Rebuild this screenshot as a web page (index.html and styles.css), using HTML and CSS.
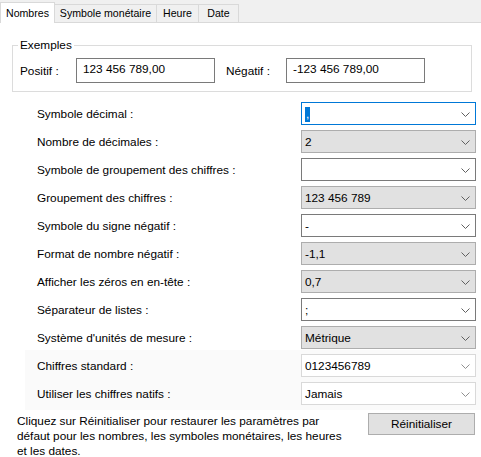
FILE: index.html
```html
<!DOCTYPE html>
<html lang="fr">
<head>
<meta charset="utf-8">
<title>Nombres</title>
<link rel="stylesheet" href="styles.css">
</head>
<body>
<div class="tabbar">
  <div class="tab tab-active tab-nombres">Nombres</div>
  <div class="tab tab-monnaie">Symbole monétaire</div>
  <div class="tab tab-heure">Heure</div>
  <div class="tab tab-date">Date</div>
</div>
<div class="panel">
  <fieldset class="group">
    <legend class="group-title">Exemples</legend>
    <div class="examples">
      <span class="ex-label">Positif :</span>
      <div class="textbox">123 456 789,00</div>
      <span class="ex-label ex-neg">Négatif :</span>
      <div class="textbox">-123 456 789,00</div>
    </div>
  </fieldset>

  <div class="settings">
    <div class="row"><span class="label">Symbole décimal :</span><div class="combo combo-focus"><span class="value"><span class="sel">,</span></span><svg class="chev" width="9" height="5" viewBox="0 0 9 5"><polyline points="0.5,0.5 4.5,4.5 8.5,0.5" fill="none" stroke="#606060" stroke-width="1"/></svg></div></div>
    <div class="row"><span class="label">Nombre de décimales :</span><div class="combo combo-list"><span class="value">2</span><svg class="chev" width="9" height="5" viewBox="0 0 9 5"><polyline points="0.5,0.5 4.5,4.5 8.5,0.5" fill="none" stroke="#606060" stroke-width="1"/></svg></div></div>
    <div class="row"><span class="label">Symbole de groupement des chiffres :</span><div class="combo combo-edit"><span class="value"></span><svg class="chev" width="9" height="5" viewBox="0 0 9 5"><polyline points="0.5,0.5 4.5,4.5 8.5,0.5" fill="none" stroke="#606060" stroke-width="1"/></svg></div></div>
    <div class="row"><span class="label">Groupement des chiffres :</span><div class="combo combo-list"><span class="value">123 456 789</span><svg class="chev" width="9" height="5" viewBox="0 0 9 5"><polyline points="0.5,0.5 4.5,4.5 8.5,0.5" fill="none" stroke="#606060" stroke-width="1"/></svg></div></div>
    <div class="row"><span class="label">Symbole du signe négatif :</span><div class="combo combo-edit"><span class="value">-</span><svg class="chev" width="9" height="5" viewBox="0 0 9 5"><polyline points="0.5,0.5 4.5,4.5 8.5,0.5" fill="none" stroke="#606060" stroke-width="1"/></svg></div></div>
    <div class="row"><span class="label">Format de nombre négatif :</span><div class="combo combo-list"><span class="value">-1,1</span><svg class="chev" width="9" height="5" viewBox="0 0 9 5"><polyline points="0.5,0.5 4.5,4.5 8.5,0.5" fill="none" stroke="#606060" stroke-width="1"/></svg></div></div>
    <div class="row"><span class="label">Afficher les zéros en en-tête :</span><div class="combo combo-list"><span class="value">0,7</span><svg class="chev" width="9" height="5" viewBox="0 0 9 5"><polyline points="0.5,0.5 4.5,4.5 8.5,0.5" fill="none" stroke="#606060" stroke-width="1"/></svg></div></div>
    <div class="row"><span class="label">Séparateur de listes :</span><div class="combo combo-edit"><span class="value">;</span><svg class="chev" width="9" height="5" viewBox="0 0 9 5"><polyline points="0.5,0.5 4.5,4.5 8.5,0.5" fill="none" stroke="#606060" stroke-width="1"/></svg></div></div>
    <div class="row"><span class="label">Système d'unités de mesure :</span><div class="combo combo-list"><span class="value">Métrique</span><svg class="chev" width="9" height="5" viewBox="0 0 9 5"><polyline points="0.5,0.5 4.5,4.5 8.5,0.5" fill="none" stroke="#606060" stroke-width="1"/></svg></div></div>
    <div class="native">
      <div class="row"><span class="label">Chiffres standard :</span><div class="combo combo-light"><span class="value">0123456789</span><svg class="chev" width="9" height="5" viewBox="0 0 9 5"><polyline points="0.5,0.5 4.5,4.5 8.5,0.5" fill="none" stroke="#909090" stroke-width="1"/></svg></div></div>
      <div class="row"><span class="label">Utiliser les chiffres natifs :</span><div class="combo combo-light"><span class="value">Jamais</span><svg class="chev" width="9" height="5" viewBox="0 0 9 5"><polyline points="0.5,0.5 4.5,4.5 8.5,0.5" fill="none" stroke="#909090" stroke-width="1"/></svg></div></div>
    </div>
  </div>

  <div class="footer">
    <p class="note">Cliquez sur Réinitialiser pour restaurer les paramètres par<br>défaut pour les nombres, les symboles monétaires, les heures<br>et les dates.</p>
    <div class="button">Réinitialiser</div>
  </div>
</div>
</body>
</html>
```

FILE: styles.css
```css
html, body {
  margin: 0;
  padding: 0;
}
body {
  width: 481px;
  height: 457px;
  overflow: hidden;
  background: #ffffff;
  color: #000000;
  font-family: "Liberation Sans", Arial, sans-serif;
  font-size: 11.8px;
}

/* Tabs */
.tabbar {
  display: flex;
  align-items: flex-end;
  height: 22px;
  background: #f0f0f0;
  border-bottom: 1px solid #d9d9d9;
}
.tab {
  box-sizing: border-box;
  height: 18px;
  line-height: 17px;
  font-size: 10.6px;
  text-align: center;
  background: #f0f0f0;
  border-top: 1px solid #d9d9d9;
  border-right: 1px solid #d9d9d9;
}
.tab-active {
  position: relative;
  z-index: 1;
  height: 21px;
  line-height: 20px;
  margin-bottom: -1px;
  background: #ffffff;
  border-left: 1px solid #d9d9d9;
}
.tab-nombres { width: 55px; }
.tab-monnaie { width: 102px; }
.tab-heure { width: 42px; }
.tab-date { width: 40px; }

/* Group box */
.group {
  margin: 14px 9px 0 12px;
  padding: 5px 7px 8px 7px;
  border: 1px solid #dcdcdc;
}
.group-title {
  padding: 0 2px;
  margin-left: -2px;
  line-height: 16px;
}
.examples {
  display: flex;
  align-items: center;
}
.ex-label {
  width: 56px;
}
.ex-neg {
  width: 60px;
  margin-left: 11px;
}
.textbox {
  box-sizing: border-box;
  width: 139px;
  height: 25px;
  border: 1px solid #7a7a7a;
  padding: 2px 0 0 6px;
  line-height: 16px;
}

/* Settings rows */
.settings {
  display: flex;
  flex-direction: column;
  gap: 5px;
  margin-top: 10px;
  padding-left: 25px;
}
.row {
  display: flex;
  align-items: center;
  height: 23px;
  padding-left: 12px;
}
.label {
  width: 264px;
}
.combo {
  box-sizing: border-box;
  width: 175px;
  height: 23px;
  display: flex;
  align-items: center;
  justify-content: space-between;
  padding: 0 5px 0 3px;
  border: 1px solid #7a7a7a;
  background: #ffffff;
}
.combo-focus {
  border-color: #0078d7;
}
.combo-list {
  background: #e1e1e1;
  border-color: #adadad;
}
.combo-light {
  border-color: #d9d9d9;
}
.value {
  line-height: 16px;
}
.sel {
  display: inline-block;
  background: #0078d7;
  color: #ffffff;
  padding: 0 1px;
  line-height: 15px;
}
.chev {
  display: block;
  margin-top: 1px;
}
.native {
  display: flex;
  flex-direction: column;
  gap: 5px;
  margin-top: -4px;
  padding: 4px 0 5px 0;
  background: #fafafa;
}

/* Footer */
.footer {
  display: flex;
  justify-content: space-between;
  align-items: flex-start;
  margin-top: 3px;
  padding: 0 6px 0 17px;
}
.note {
  margin: 1px 0 0 0;
  line-height: 15px;
}
.button {
  box-sizing: border-box;
  width: 107px;
  height: 22px;
  line-height: 20px;
  text-align: center;
  background: #e1e1e1;
  border: 1px solid #adadad;
}
```
